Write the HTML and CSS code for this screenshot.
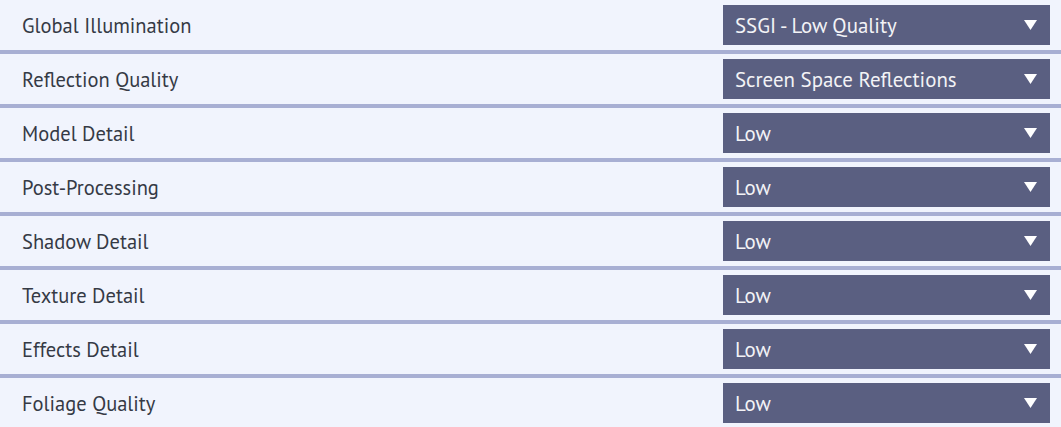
FILE: index.html
```html
<!DOCTYPE html>
<html>
<head>
<meta charset="utf-8">
<link rel="stylesheet" href="styles.css">
</head>
<body>
<div class="settings">
  <div class="row"><span class="label">Global Illumination</span><div class="select"><span>SSGI - Low Quality</span><svg class="arrow" viewBox="0 0 13 10"><path d="M0 0H13L6.5 10Z"/></svg></div></div>
  <div class="row"><span class="label">Reflection Quality</span><div class="select"><span>Screen Space Reflections</span><svg class="arrow" viewBox="0 0 13 10"><path d="M0 0H13L6.5 10Z"/></svg></div></div>
  <div class="row"><span class="label">Model Detail</span><div class="select"><span>Low</span><svg class="arrow" viewBox="0 0 13 10"><path d="M0 0H13L6.5 10Z"/></svg></div></div>
  <div class="row"><span class="label">Post-Processing</span><div class="select"><span>Low</span><svg class="arrow" viewBox="0 0 13 10"><path d="M0 0H13L6.5 10Z"/></svg></div></div>
  <div class="row"><span class="label">Shadow Detail</span><div class="select"><span>Low</span><svg class="arrow" viewBox="0 0 13 10"><path d="M0 0H13L6.5 10Z"/></svg></div></div>
  <div class="row"><span class="label">Texture Detail</span><div class="select"><span>Low</span><svg class="arrow" viewBox="0 0 13 10"><path d="M0 0H13L6.5 10Z"/></svg></div></div>
  <div class="row"><span class="label">Effects Detail</span><div class="select"><span>Low</span><svg class="arrow" viewBox="0 0 13 10"><path d="M0 0H13L6.5 10Z"/></svg></div></div>
  <div class="row"><span class="label">Foliage Quality</span><div class="select"><span>Low</span><svg class="arrow" viewBox="0 0 13 10"><path d="M0 0H13L6.5 10Z"/></svg></div></div>
</div>
</body>
</html>
```
FILE: styles.css
```css
html, body {
  margin: 0;
  padding: 0;
  background: #f1f4fd;
}
body {
  font-family: "PT Sans", "Noto Sans", sans-serif;
  font-size: 20.5px;
}
.settings {
  display: flex;
  flex-direction: column;
}
.row {
  display: flex;
  align-items: center;
  justify-content: space-between;
  height: 50px;
  padding: 0 11px 0 22px;
  border-bottom: 4px solid #a8afd3;
}
.label {
  color: #353a45;
}
.select {
  display: flex;
  align-items: center;
  justify-content: space-between;
  width: 327px;
  height: 40px;
  box-sizing: border-box;
  padding: 0 13px 0 12px;
  background: #5a5f81;
  color: #f3f3f6;
  font-size: 20.9px;
}
.arrow {
  width: 13px;
  height: 10px;
  fill: #ffffff;
}
```
